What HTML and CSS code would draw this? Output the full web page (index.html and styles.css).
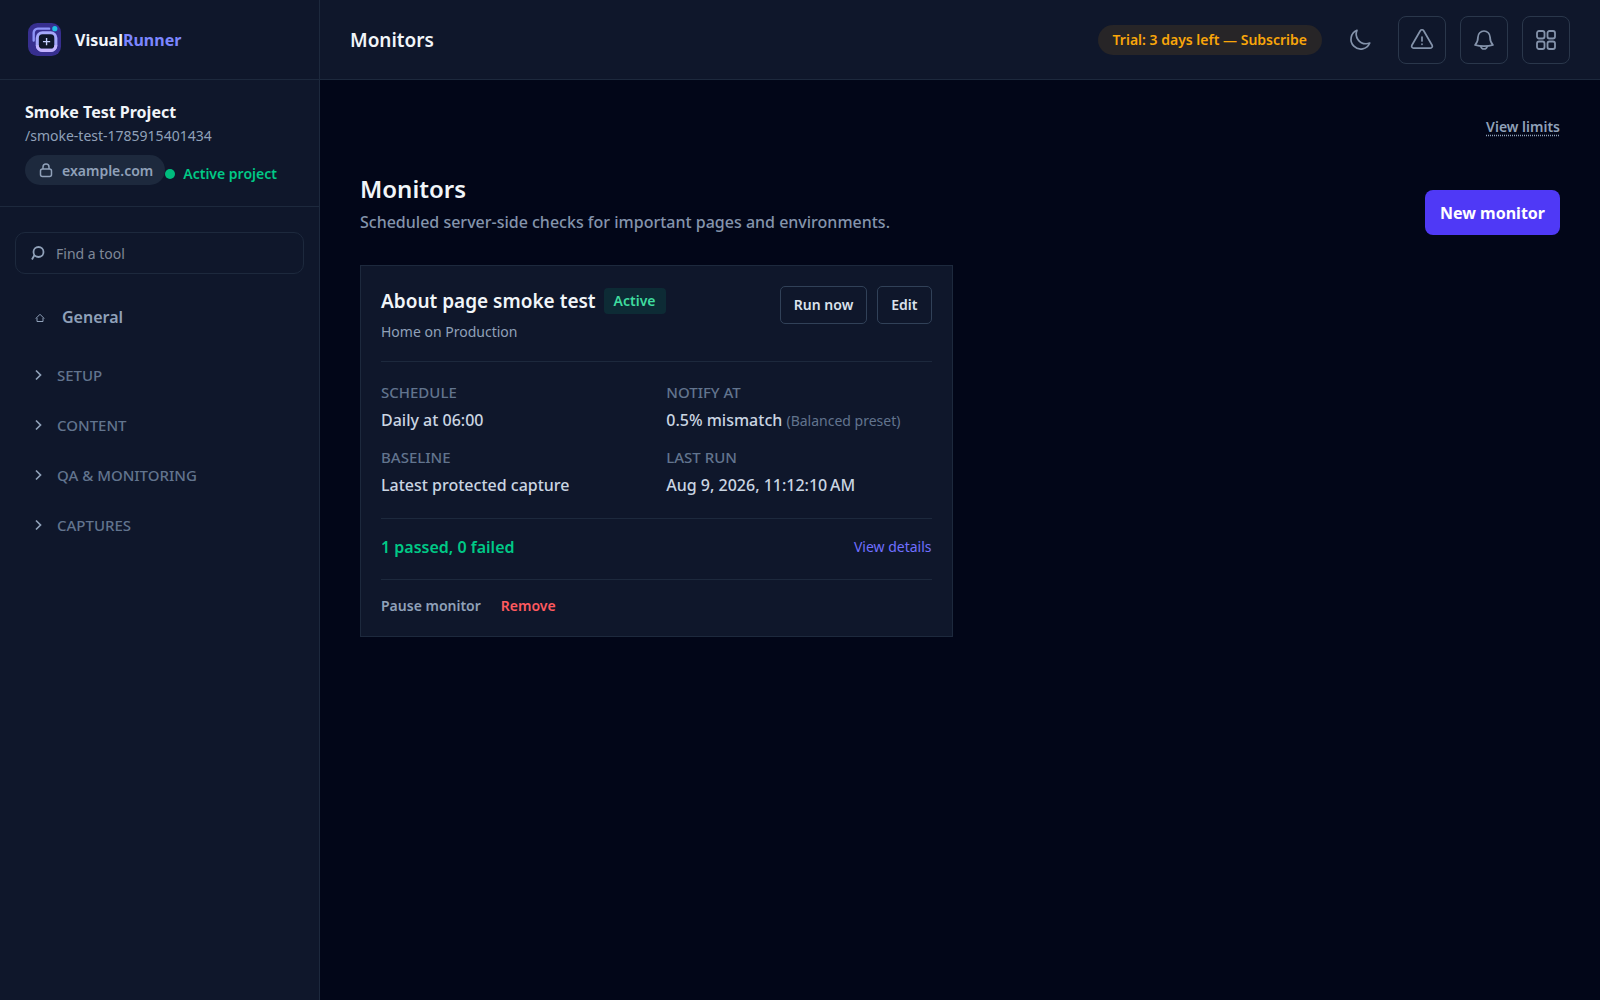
FILE: index.html
```html
<!DOCTYPE html>
<html lang="en">
<head>
  <meta charset="UTF-8">
  <meta name="viewport" content="width=device-width, initial-scale=1.0">
  <title>Monitors - VisualRunner</title>
  <link rel="stylesheet" href="styles.css">
</head>
<body>
  <div class="layout">
    <aside class="sidebar">
      <div class="brand">
        <svg class="logo" viewBox="0 0 32 32" fill="none" aria-hidden="true">
          <rect width="32" height="32" rx="9" fill="#372f8f"/>
          <path d="M5.500 17V9.500a4 4 0 0 1 4-4H20.500" stroke="#8e94f8" stroke-width="2.300" stroke-linecap="round"/>
          <rect x="9" y="9.500" width="18" height="17" rx="5" fill="#0f172b" stroke="#a5a8fb" stroke-width="3"/>
          <path d="M9 21.500a5 5 0 0 0 5 5h8a5 5 0 0 0 5-5" stroke="#c4b4ff" stroke-width="3"/>
          <path d="M18 14.500v7M14.500 18h7" stroke="#c6d2ff" stroke-width="1.300"/>
          <circle cx="26" cy="5.500" r="2.500" fill="#1fc0e2"/>
        </svg>
        <span class="brand-name">Visual<span>Runner</span></span>
      </div>

      <div class="project">
        <h2>Smoke Test Project</h2>
        <p class="slug">/smoke-test-1785915401434</p>
        <div class="project-meta">
          <span class="domain">
            <svg viewBox="0 0 16 16" width="16" height="16" fill="none" stroke="currentColor" stroke-width="1.5" aria-hidden="true">
              <rect x="2.500" y="6" width="11" height="7.500" rx="2"/>
              <path d="M5 6V4a3 3 0 0 1 6 0v2"/>
            </svg>
            example.com
          </span>
          <span class="status">Active project</span>
        </div>
      </div>

      <div class="search">
        <svg viewBox="0 0 16 16" width="16" height="16" fill="none" stroke="currentColor" stroke-width="1.8" aria-hidden="true">
          <circle cx="8.500" cy="7" r="5"/>
          <path d="M4.500 10 2 14.500"/>
        </svg>
        <input type="text" placeholder="Find a tool" aria-label="Find a tool">
      </div>

      <nav class="nav">
        <a class="nav-general" href="#">
          <svg viewBox="0 0 10 10" width="10" height="10" fill="none" stroke="currentColor" aria-hidden="true">
            <path d="M.8 6.500 5 2.300l4.200 4.200M2 6v3.500h6V6"/>
          </svg>
          General
        </a>
        <button class="nav-group" type="button">
          <svg viewBox="0 0 10 12" width="10" height="12" fill="none" stroke="currentColor" stroke-width="1.7" aria-hidden="true"><path d="m1 1.500 4.500 4.500L1 10.500"/></svg>
          Setup
        </button>
        <button class="nav-group" type="button">
          <svg viewBox="0 0 10 12" width="10" height="12" fill="none" stroke="currentColor" stroke-width="1.7" aria-hidden="true"><path d="m1 1.500 4.500 4.500L1 10.500"/></svg>
          Content
        </button>
        <button class="nav-group" type="button">
          <svg viewBox="0 0 10 12" width="10" height="12" fill="none" stroke="currentColor" stroke-width="1.7" aria-hidden="true"><path d="m1 1.500 4.500 4.500L1 10.500"/></svg>
          QA &amp; Monitoring
        </button>
        <button class="nav-group" type="button">
          <svg viewBox="0 0 10 12" width="10" height="12" fill="none" stroke="currentColor" stroke-width="1.7" aria-hidden="true"><path d="m1 1.500 4.500 4.500L1 10.500"/></svg>
          Captures
        </button>
      </nav>
    </aside>

    <div class="content">
      <header class="topbar">
        <h1>Monitors</h1>
        <div class="topbar-actions">
          <a class="trial" href="#">Trial: 3 days left — Subscribe</a>
          <button class="icon-btn plain" type="button" aria-label="Toggle theme">
            <svg viewBox="0 0 24 24" fill="none" stroke="currentColor" stroke-width="1.7" stroke-linejoin="round" aria-hidden="true">
              <path d="M21.750 15A9.750 9.750 0 0 1 18 15.750 9.750 9.750 0 0 1 9 2.250 9.750 9.750 0 1 0 21.750 15Z"/>
            </svg>
          </button>
          <button class="icon-btn" type="button" aria-label="Issues">
            <svg viewBox="0 0 24 24" fill="none" stroke="currentColor" stroke-width="1.7" stroke-linecap="round" stroke-linejoin="round" aria-hidden="true">
              <path d="M10.300 2.700 1.900 17.200a2 2 0 0 0 1.700 3h16.800a2 2 0 0 0 1.700-3L13.700 2.700a2 2 0 0 0-3.400 0Z"/>
              <path d="M12 9v4M12 16v.3"/>
            </svg>
          </button>
          <button class="icon-btn" type="button" aria-label="Notifications">
            <svg viewBox="0 0 24 24" fill="none" stroke="currentColor" stroke-width="1.7" stroke-linecap="round" stroke-linejoin="round" aria-hidden="true">
              <path d="M6 9a6 6 0 0 1 12 0c0 4.500 1 6 3 8-2.700.8-5.500 1.200-9 1.200S5.700 17.800 3 17c2-2 3-3.500 3-8Z"/>
              <path d="M8.800 18.500a3.300 3.300 0 0 0 6.400 0"/>
            </svg>
          </button>
          <button class="icon-btn" type="button" aria-label="Apps">
            <svg viewBox="0 0 24 24" fill="none" stroke="currentColor" stroke-width="1.8" aria-hidden="true">
              <rect x="3" y="3" width="7.500" height="7.500" rx="2"/>
              <rect x="13.500" y="3" width="7.500" height="7.500" rx="2"/>
              <rect x="3" y="13.500" width="7.500" height="7.500" rx="2"/>
              <rect x="13.500" y="13.500" width="7.500" height="7.500" rx="2"/>
            </svg>
          </button>
        </div>
      </header>

      <main class="main">
        <div class="limits"><a href="#">View limits</a></div>

        <div class="page-head">
          <div>
            <h2>Monitors</h2>
            <p>Scheduled server-side checks for important pages and environments.</p>
          </div>
          <button class="btn-primary" type="button">New monitor</button>
        </div>

        <div class="cards">
          <article class="card">
            <div class="card-head">
              <div>
                <div class="card-title">
                  <h3>About page smoke test</h3>
                  <span class="badge">Active</span>
                </div>
                <p class="card-sub">Home on Production</p>
              </div>
              <div class="card-buttons">
                <button class="btn" type="button">Run now</button>
                <button class="btn" type="button">Edit</button>
              </div>
            </div>
            <dl class="details">
              <div>
                <dt>Schedule</dt>
                <dd>Daily at 06:00</dd>
              </div>
              <div>
                <dt>Notify at</dt>
                <dd>0.5% mismatch <small>(Balanced preset)</small></dd>
              </div>
              <div>
                <dt>Baseline</dt>
                <dd>Latest protected capture</dd>
              </div>
              <div>
                <dt>Last run</dt>
                <dd>Aug 9, 2026, 11:12:10&#8239;AM</dd>
              </div>
            </dl>
            <div class="result">
              <span class="passed">1 passed, 0 failed</span>
              <a href="#">View details</a>
            </div>
            <div class="card-foot">
              <button class="link-btn" type="button">Pause monitor</button>
              <button class="link-btn danger" type="button">Remove</button>
            </div>
          </article>
        </div>
      </main>
    </div>
  </div>
</body>
</html>
```
FILE: styles.css
```css
* {
  box-sizing: border-box;
}

body {
  margin: 0;
  background: #020618;
  color: #f1f5f9;
  font-family: "Segoe UI", "Noto Sans", sans-serif;
  font-size: 16px;
  line-height: 24px;
}

h1, h2, h3, p, dl, dd {
  margin: 0;
}

a {
  color: inherit;
  text-decoration: none;
}

button, input {
  font: inherit;
  color: inherit;
  cursor: pointer;
}

svg {
  display: block;
  flex-shrink: 0;
}

.layout {
  display: flex;
  min-height: 100vh;
}

/* Sidebar */
.sidebar {
  width: 320px;
  flex-shrink: 0;
  background: #0f172b;
  border-right: 1px solid #1d293d;
}

.brand {
  display: flex;
  align-items: center;
  gap: 14px;
  height: 80px;
  padding: 0 28px;
  border-bottom: 1px solid #1d293d;
}

.logo {
  width: 33px;
  height: 33px;
}

.brand-name {
  font-size: 16px;
  font-weight: 700;
}

.brand-name span {
  color: #7c86ff;
}

.project {
  padding: 20px 25px 21px;
  border-bottom: 1px solid #1d293d;
}

.project h2 {
  margin-bottom: 2px;
  font-size: 16px;
  line-height: 24px;
  font-weight: 700;
}

.slug {
  color: #90a1b9;
  font-size: 14px;
  line-height: 20px;
}

.project-meta {
  display: flex;
  align-items: center;
  margin-top: 9px;
}

.domain {
  display: flex;
  align-items: center;
  gap: 8px;
  height: 30px;
  padding: 1px 12px 0 13px;
  border-radius: 15px;
  background: #1d293d;
  color: #90a1b9;
  font-size: 14px;
  font-weight: 600;
}

.status {
  display: flex;
  align-items: center;
  gap: 8px;
  padding-top: 8px;
  color: #00c986;
  font-size: 14px;
  line-height: 20px;
  font-weight: 600;
}

.status::before {
  content: "";
  width: 10px;
  height: 10px;
  border-radius: 50%;
  background: #00bc7d;
}

.search {
  display: flex;
  align-items: center;
  gap: 10px;
  height: 42px;
  margin: 25px 15px 0;
  padding: 0 14px;
  border: 1px solid #1d293d;
  border-radius: 10px;
  color: #90a1b9;
}

.search input {
  flex: 1;
  min-width: 0;
  padding: 2px 0 0;
  border: 0;
  outline: 0;
  background: none;
  font-size: 14px;
}

.search input::placeholder {
  color: #808998;
  opacity: 1;
}

.nav {
  display: flex;
  flex-direction: column;
  padding: 18px 35px;
}

.nav-general {
  display: flex;
  align-items: center;
  gap: 17px;
  height: 50px;
  margin-bottom: 8px;
  color: #90a1b9;
  font-weight: 600;
}

.nav-group {
  display: flex;
  align-items: center;
  gap: 12px;
  height: 50px;
  padding: 0;
  border: 0;
  background: none;
  color: #62748e;
  font-size: 15px;
  font-weight: 500;
  text-transform: uppercase;
}

.nav-group svg {
  color: #90a1b9;
}

/* Top bar */
.content {
  flex: 1;
  min-width: 0;
}

.topbar {
  display: flex;
  align-items: center;
  justify-content: space-between;
  height: 80px;
  padding: 0 30px;
  background: #0f172b;
  border-bottom: 1px solid #1d293d;
}

.topbar h1 {
  font-size: 19px;
  font-weight: 600;
}

.topbar-actions {
  display: flex;
  align-items: center;
  gap: 14px;
}

.trial {
  padding: 3px 15px;
  border-radius: 15px;
  background: #272527;
  color: #f9a60a;
  font-size: 14px;
  font-weight: 600;
}

.icon-btn {
  display: flex;
  align-items: center;
  justify-content: center;
  width: 48px;
  height: 48px;
  padding: 0;
  border: 1px solid #2a374b;
  border-radius: 8px;
  background: none;
  color: #8493ab;
}

.icon-btn.plain {
  border-color: transparent;
}

.icon-btn svg {
  width: 24px;
  height: 24px;
}

/* Page */
.main {
  padding: 35px 40px;
}

.limits {
  text-align: right;
  color: #90a1b9;
  font-size: 14px;
  font-weight: 600;
}

.limits a {
  text-decoration: underline dotted;
  text-underline-offset: 3px;
}

.page-head {
  display: flex;
  align-items: flex-end;
  justify-content: space-between;
  margin-top: 30px;
}

.page-head h2 {
  font-size: 24px;
  line-height: 40px;
  font-weight: 600;
}

.page-head p {
  color: #8494ac;
  line-height: 26px;
  font-weight: 500;
}

.btn-primary {
  height: 45px;
  padding: 0 15px;
  border: 0;
  border-radius: 8px;
  background: #4f39f6;
  color: #fff;
  font-weight: 700;
}

.cards {
  display: grid;
  grid-template-columns: 1fr 1fr;
  gap: 15px;
  margin-top: 30px;
}

.card {
  padding: 20px;
  border: 1px solid #1d293d;
  background: #0f172b;
}

.card-head {
  display: flex;
  justify-content: space-between;
  align-items: flex-start;
  padding-bottom: 15px;
}

.card-title {
  display: flex;
  align-items: center;
  gap: 8px;
  margin-bottom: 2px;
}

.card h3 {
  font-size: 19px;
  line-height: 30px;
  font-weight: 600;
}

.badge {
  padding: 2px 10px;
  border-radius: 4px;
  background: #0d2b35;
  color: #3fdc9f;
  font-size: 14px;
  line-height: 22px;
  font-weight: 600;
}

.card-sub {
  color: #90a1b9;
  font-size: 14px;
  line-height: 28px;
}

.card-buttons {
  display: flex;
  gap: 10px;
}

.btn {
  height: 38px;
  padding: 0 13px;
  border: 1px solid #314158;
  border-radius: 5px;
  background: none;
  color: #dbe2ec;
  font-size: 14px;
  font-weight: 600;
}

.details {
  display: grid;
  grid-template-columns: 1fr 1fr;
  gap: 8px 20px;
  padding: 17px 0 18px;
  border-top: 1px solid #1d293d;
}

.details dt {
  color: #62748e;
  font-size: 15px;
  line-height: 26px;
  font-weight: 500;
  text-transform: uppercase;
}

.details dd {
  color: #cad5e2;
  line-height: 30px;
  font-weight: 500;
}

.details small {
  color: #62748e;
  font-size: 14px;
  font-weight: 400;
}

.result {
  display: flex;
  align-items: center;
  justify-content: space-between;
  height: 62px;
  padding-bottom: 4px;
  border-top: 1px solid #1d293d;
  border-bottom: 1px solid #1d293d;
}

.passed {
  color: #00c986;
  font-weight: 600;
}

.result a {
  color: #706fff;
  font-size: 14px;
}

.card-foot {
  display: flex;
  gap: 20px;
  padding-top: 16px;
}

.link-btn {
  padding: 0;
  border: 0;
  background: none;
  color: #90a1b9;
  font-size: 14px;
  line-height: 20px;
  font-weight: 600;
}

.link-btn.danger {
  color: #ff5a5f;
}
```
